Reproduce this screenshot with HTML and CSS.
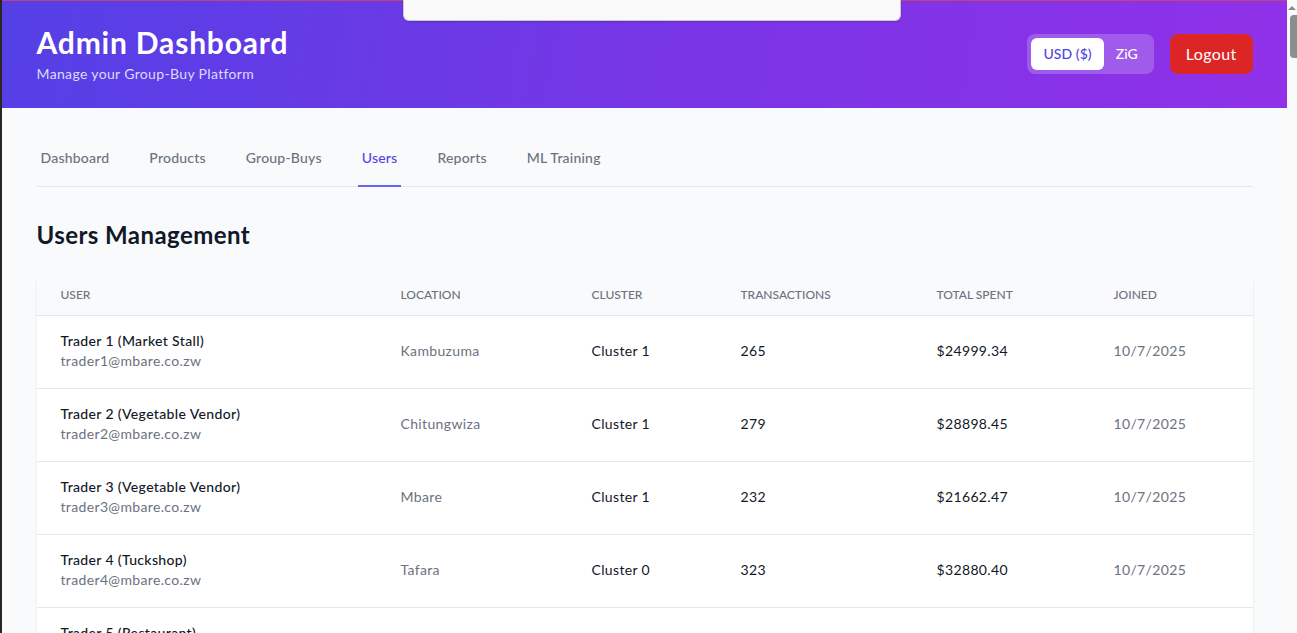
FILE: index.html
```html
<!DOCTYPE html>
<html lang="en">
<head>
<meta charset="utf-8">
<title>Admin Dashboard</title>
<link rel="stylesheet" href="styles.css">
</head>
<body>
<div class="frame">
  <div class="edge"></div>
  <div class="page">
    <header class="topbar">
      <div class="container topbar-inner">
        <div class="brand">
          <h1>Admin Dashboard</h1>
          <p>Manage your Group-Buy Platform</p>
        </div>
        <div class="actions">
          <div class="toggle">
            <button class="toggle-btn active">USD ($)</button>
            <button class="toggle-btn">ZiG</button>
          </div>
          <button class="logout">Logout</button>
        </div>
      </div>
    </header>
    <main class="container main">
      <nav class="tabs">
        <a class="tab">Dashboard</a>
        <a class="tab">Products</a>
        <a class="tab">Group-Buys</a>
        <a class="tab active">Users</a>
        <a class="tab">Reports</a>
        <a class="tab">ML Training</a>
      </nav>
      <h2 class="section-title">Users Management</h2>
      <div class="card">
        <table class="users">
          <colgroup>
            <col class="c-user"><col class="c-loc"><col class="c-cluster"><col class="c-tx"><col class="c-spent"><col class="c-joined">
          </colgroup>
          <thead>
            <tr><th>User</th><th>Location</th><th>Cluster</th><th>Transactions</th><th>Total Spent</th><th>Joined</th></tr>
          </thead>
          <tbody>
            <tr>
              <td><div class="name">Trader 1 (Market Stall)</div><div class="email">trader1@mbare.co.zw</div></td>
              <td class="muted">Kambuzuma</td><td>Cluster 1</td><td>265</td><td>$24999.34</td><td class="muted">10/7/2025</td>
            </tr>
            <tr>
              <td><div class="name">Trader 2 (Vegetable Vendor)</div><div class="email">trader2@mbare.co.zw</div></td>
              <td class="muted">Chitungwiza</td><td>Cluster 1</td><td>279</td><td>$28898.45</td><td class="muted">10/7/2025</td>
            </tr>
            <tr>
              <td><div class="name">Trader 3 (Vegetable Vendor)</div><div class="email">trader3@mbare.co.zw</div></td>
              <td class="muted">Mbare</td><td>Cluster 1</td><td>232</td><td>$21662.47</td><td class="muted">10/7/2025</td>
            </tr>
            <tr>
              <td><div class="name">Trader 4 (Tuckshop)</div><div class="email">trader4@mbare.co.zw</div></td>
              <td class="muted">Tafara</td><td>Cluster 0</td><td>323</td><td>$32880.40</td><td class="muted">10/7/2025</td>
            </tr>
            <tr>
              <td><div class="name">Trader 5 (Restaurant)</div><div class="email">trader5@mbare.co.zw</div></td>
              <td class="muted">Highfield</td><td>Cluster 2</td><td>198</td><td>$19876.12</td><td class="muted">10/7/2025</td>
            </tr>
          </tbody>
        </table>
      </div>
    </main>
  </div>
  <div class="scrollbar">
    <div class="sb-arrow"></div>
    <div class="sb-thumb"></div>
  </div>
</div>
<div class="popup"></div>
</body>
</html>
```
FILE: styles.css
```css
* { box-sizing: border-box; }
html, body { margin: 0; padding: 0; height: 100%; overflow: hidden; }
body {
  font-family: "Lato", "Noto Sans", sans-serif;
  letter-spacing: 0.022em;
  background: #f9fafb;
  color: #111827;
}
.frame { display: flex; height: 633px; }
.edge { width: 2px; flex: none; background: #2b2622; }
.page {
  flex: 1;
  min-width: 0;
  background: #f9fafb;
  border-top: 1px solid #c2417a;
  overflow: hidden;
}
.scrollbar {
  width: 10px;
  flex: none;
  background: #fafafa;
  display: flex;
  flex-direction: column;
  align-items: flex-end;
}
.sb-arrow {
  margin: 6px 1px 0 0;
  width: 0; height: 0;
  border-left: 4px solid transparent;
  border-right: 4px solid transparent;
  border-bottom: 4px solid #8a8a8a;
}
.sb-thumb {
  margin-top: 5px;
  width: 7px;
  height: 43px;
  background: #8e8e8e;
  border-radius: 4px 0 0 4px;
}
.popup {
  position: absolute;
  left: 403px;
  top: 0;
  width: 498px;
  height: 21px;
  background: #f9f9f9;
  border: 1px solid #c9c9cf;
  border-top: none;
  border-radius: 0 0 6px 6px;
  box-shadow: 0 1px 2px rgba(0,0,0,0.15);
}

.container { max-width: 1280px; margin: 0 auto; padding: 0 32px; }

.topbar {
  background: linear-gradient(100deg, #5440e6 0%, #7a35e6 55%, #9031e8 100%);
  color: #fff;
}
.topbar-inner {
  display: flex;
  align-items: center;
  justify-content: space-between;
  padding-top: 23px;
  padding-bottom: 24px;
}
.brand h1 { margin: 0; font-size: 30px; line-height: 36px; font-weight: 700; letter-spacing: 0.027em; }
.brand p { margin: 4px 0 0; font-size: 14px; line-height: 20px; color: #dcdcfb; }
.actions { display: flex; align-items: center; gap: 16px; }
.toggle {
  display: flex;
  padding: 4px;
  border-radius: 8px;
  background: rgba(255,255,255,0.2);
}
.toggle-btn {
  font: inherit;
  letter-spacing: 0.005em;
  font-size: 14px;
  line-height: 20px;
  font-weight: 500;
  padding: 6px 12px;
  border: none;
  border-radius: 6px;
  background: transparent;
  color: #fff;
}
.toggle-btn.active { background: #fff; color: #4f46e5; }
.logout {
  font: inherit;
  letter-spacing: inherit;
  font-size: 16px;
  line-height: 24px;
  padding: 8px 16px;
  border: none;
  border-radius: 8px;
  background: #dc2626;
  color: #fff;
}

.main { padding-top: 25px; }
.tabs {
  display: flex;
  gap: 32px;
  border-bottom: 1px solid #e5e7eb;
}
.tab {
  padding: 15px 4px 17px;
  font-size: 14px;
  line-height: 20px;
  font-weight: 500;
  letter-spacing: 0.015em;
  color: #6b7280;
  border-bottom: 2px solid transparent;
  margin-bottom: -1px;
}
.tab.active { color: #4f46e5; border-bottom-color: #6366f1; }

.section-title {
  margin: 32px 0 24px;
  font-size: 24px;
  line-height: 32px;
  font-weight: 700;
  letter-spacing: 0.018em;
  color: #111827;
}

.card {
  background: #fff;
  border-radius: 8px;
  box-shadow: 0 1px 3px rgba(0,0,0,0.08), 0 1px 2px rgba(0,0,0,0.04);
  overflow: hidden;
}
.users { width: 100%; border-collapse: collapse; table-layout: fixed; }
.c-user { width: 340px; }
.c-loc { width: 191px; }
.c-cluster { width: 149px; }
.c-tx { width: 196px; }
.c-spent { width: 177px; }
.c-joined { width: 163px; }
.users th {
  background: #f9fafb;
  padding: 12px 24px;
  text-align: left;
  font-size: 12px;
  line-height: 16px;
  font-weight: 500;
  letter-spacing: 0;
  text-transform: uppercase;
  color: #6b7280;
  border-bottom: 1px solid #e5e7eb;
}
.users td {
  padding: 15px 24px 17px;
  font-size: 14px;
  line-height: 20px;
  color: #111827;
  white-space: nowrap;
  border-bottom: 1px solid #e5e7eb;
}
.users .name { font-weight: 500; color: #111827; }
.users .email { color: #6b7280; }
.users td.muted { color: #6b7280; }
```
